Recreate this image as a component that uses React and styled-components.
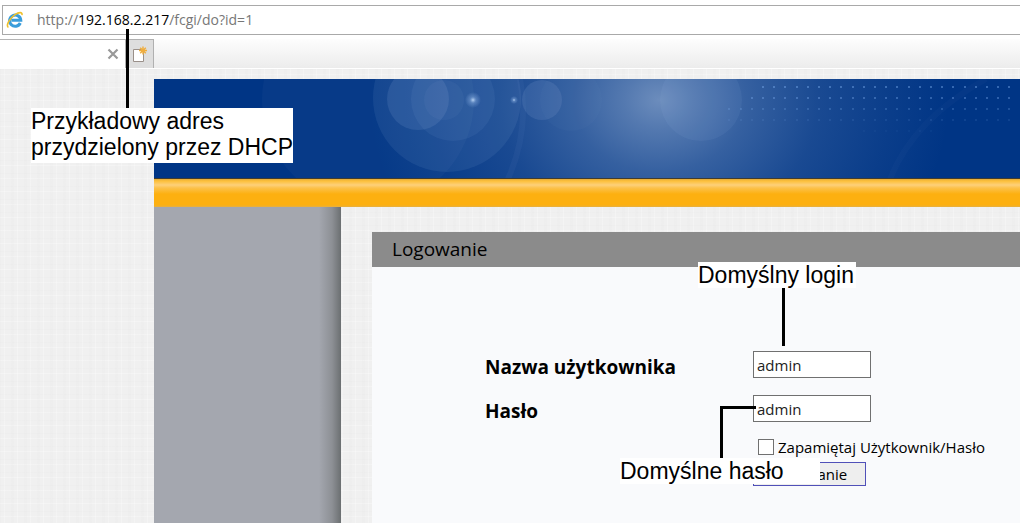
import React from 'react';
import styled, { createGlobalStyle } from 'styled-components';

const ui = '"Open Sans", "Noto Sans", sans-serif';
const noteFont = '"Liberation Sans", Arial, sans-serif';

const GlobalStyle = createGlobalStyle`
  *, *::before, *::after { box-sizing: border-box; }
  html, body, #root { height: 100%; }
  body {
    margin: 0;
    overflow: hidden;
    font-family: ${ui};
    color: #000;
    background: #f1f1f1;
  }
`;

const Page = styled.div`
  position: relative;
  min-height: 100%;
  display: flex;
  flex-direction: column;
`;

const Browser = styled.header`
  display: flex;
  flex-direction: column;
  background: #fff;
`;

const AddressBar = styled.form`
  display: flex;
  align-items: center;
  gap: 13px;
  height: 30px;
  margin: 5px 0 4px 2px;
  padding-left: 3px;
  border: 1px solid #a9a9a9;
  border-right: 0;
`;

const Address = styled.a`
  font-size: 14px;
  line-height: 20px;
  color: #777;
  text-decoration: none;
`;

const Host = styled.span`
  color: #000;
`;

const TabStrip = styled.nav`
  display: flex;
  height: 30px;
  border-bottom: 1px solid #fff;
  background: linear-gradient(#fdfdfd, #ececec);
`;

const Tab = styled.div`
  display: flex;
  align-items: center;
  justify-content: flex-end;
  width: 125px;
  padding-right: 6px;
  border-top: 1px solid #b4b4b4;
  background: #fff;
`;

const IconButton = styled.button`
  display: flex;
  align-items: center;
  justify-content: center;
  padding: 0;
  border: 0;
  background: none;
`;

const NewTab = styled(IconButton)`
  width: 29px;
  background: #dedede;
  border: solid #b0b0b0;
  border-width: 1px 1px 0;
`;

const Site = styled.div`
  flex: 1;
  display: flex;
  flex-direction: column;
  padding: 10px 0 0 154px;
  background-color: #f0f0f0;
  background-image:
    repeating-linear-gradient(90deg, rgba(0, 0, 0, 0.008) 0 1px, transparent 1px 4px, rgba(255, 255, 255, 0.25) 4px 5px, transparent 5px 11px, rgba(0, 0, 0, 0.008) 11px 13px),
    repeating-linear-gradient(rgba(0, 0, 0, 0.008) 0 1px, transparent 1px 5px, rgba(255, 255, 255, 0.25) 5px 6px, transparent 6px 13px);
`;

const Banner = styled.div`
  height: 100px;
  overflow: hidden;
  background: #003585;
  border-bottom: 1px solid #403c30;
`;

const BannerArt = styled.svg`
  display: block;
`;

const Ribbon = styled.div`
  height: 28px;
  background: linear-gradient(#e2ab3a 0, #fdc03a 2px, #fdd07a 6px, #fcc14a 9px, #fdb010 15px, #fdb010 26px, #e6b044 28px);
`;

const Columns = styled.div`
  flex: 1;
  display: flex;
  align-items: stretch;
`;

const Sidebar = styled.aside`
  width: 187px;
  flex: none;
  background: linear-gradient(90deg, #a4a7af calc(100% - 22px), #8d9095 calc(100% - 9px), #6b6f71);
`;

const Panel = styled.main`
  flex: 1;
  margin: 25px 0 0 31px;
  background: #f9fafc;
`;

const PanelTitle = styled.h1`
  margin: 0;
  padding-left: 20px;
  font-size: 19px;
  font-weight: 400;
  line-height: 35px;
  background: #8b8b8b;
`;

const Form = styled.form`
  display: grid;
  grid-template-columns: 268px 1fr;
  row-gap: 12px;
  padding: 84px 0 0 113px;
`;

const Label = styled.label`
  font-size: 19px;
  font-weight: 700;
  line-height: 32px;
`;

const Field = styled.input`
  width: 118px;
  height: 27px;
  padding: 0 3px;
  border: 1px solid #707070;
  background: #fff;
  font: 15px/24px ${ui};
  color: #222;
`;

const Actions = styled.div`
  grid-column: 2;
  display: flex;
  flex-direction: column;
  align-items: flex-start;
  gap: 7px;
`;

const Remember = styled.label`
  display: flex;
  align-items: center;
  gap: 4px;
  padding-left: 5px;
  font-size: 15px;
  line-height: 16px;
  white-space: nowrap;
`;

const Checkbox = styled.input`
  appearance: none;
  width: 16px;
  height: 16px;
  margin: 0;
  border: 1px solid #707070;
  background: #fff;
`;

const Submit = styled.button`
  width: 113px;
  height: 24px;
  padding: 0;
  border: 1px solid #5050b8;
  background: #eee;
  font: 15px/22px ${ui};
  color: #000;
`;

const Note = styled.p`
  position: absolute;
  left: ${(p) => p.$x}px;
  top: ${(p) => p.$y}px;
  min-width: ${(p) => p.$w}px;
  min-height: ${(p) => p.$h}px;
  margin: 0;
  font: 23px/26px ${noteFont};
  white-space: nowrap;
  background: #fff;
`;

const Pointer = styled.span`
  position: absolute;
  left: ${(p) => p.$x}px;
  top: ${(p) => p.$y}px;
  width: ${(p) => p.$w}px;
  height: ${(p) => p.$h}px;
  border: solid #000;
  border-width: ${(p) => (p.$elbow ? '3px 0 0 3px' : '0 0 0 3px')};
`;

function BrowserIcon() {
  return (
    <svg width="18" height="18" viewBox="0 0 18 18" fill="none" aria-hidden="true">
      <path d="M14.300 12A5.600 5.600 0 1 1 14.800 9.300H5.500" stroke="#3a9ddb" strokeWidth="3" />
      <path d="M2.500 16.300C-.5 15.500 3 7.500 9 3.600c4-2.600 7.600-2.800 7 .6" stroke="#f0c02c" strokeWidth="1.600" />
    </svg>
  );
}

function NewTabIcon() {
  return (
    <svg width="16" height="16" viewBox="0 0 16 16" fill="none" aria-hidden="true">
      <path d="M1.500 3.500h10v12h-10z" fill="#fff" stroke="#9a908a" />
      <path d="M11 .5v8M7 4.500h8M8.200 1.700l5.600 5.600M13.800 1.700L8.200 7.300" stroke="#f0ad3c" strokeWidth="1.400" />
    </svg>
  );
}

const dotRows = [
  { y: 7, from: 10, to: 36, opacity: 0.42 },
  { y: 18, from: 9, to: 36, opacity: 0.36 },
  { y: 29, from: 7, to: 36, opacity: 0.24 },
  { y: 40, from: 7, to: 36, opacity: 0.12 },
  { y: 51, from: 19, to: 26, opacity: 0.05 },
];

function Art() {
  return (
    <BannerArt width="1600" height="100" viewBox="0 0 1600 100" aria-hidden="true">
      <defs>
        <radialGradient id="glow">
          <stop offset="0" stopColor="#7f9cc6" stopOpacity=".85" />
          <stop offset=".12" stopColor="#7f9cc6" stopOpacity=".66" />
          <stop offset=".3" stopColor="#7f9cc6" stopOpacity=".42" />
          <stop offset=".55" stopColor="#7f9cc6" stopOpacity=".2" />
          <stop offset=".8" stopColor="#7f9cc6" stopOpacity=".08" />
          <stop offset="1" stopColor="#7f9cc6" stopOpacity="0" />
        </radialGradient>
        <radialGradient id="star">
          <stop offset="0" stopColor="#b8d4f4" />
          <stop offset=".4" stopColor="#7ea4d8" stopOpacity=".5" />
          <stop offset="1" stopColor="#7ea4d8" stopOpacity="0" />
        </radialGradient>
      </defs>
      <ellipse cx="505" cy="21" rx="290" ry="240" fill="url(#glow)" />
      <g fill="#a9c4ee">
        <circle cx="214" cy="21" r="106" opacity=".04" />
        <circle cx="293" cy="19" r="74" opacity=".09" />
        <circle cx="264" cy="20" r="31" opacity=".12" />
        <circle cx="299" cy="20" r="42" opacity=".07" />
        <circle cx="290" cy="21" r="20" opacity=".05" />
        <circle cx="388" cy="21" r="20" opacity=".12" />
        <circle cx="417" cy="21" r="31" opacity=".03" />
        <circle cx="547" cy="21" r="41" opacity=".07" />
      </g>
      <path d="M366 0Q376 50 354 100" fill="none" stroke="#7d9fd4" strokeWidth="6" opacity=".07" />
      <path d="M832 0Q760 40 736 100" fill="none" stroke="#7d9fd4" strokeWidth="6" opacity=".04" />
      <circle cx="319" cy="21" r="8" fill="url(#star)" />
      <circle cx="360" cy="21" r="4" fill="url(#star)" />
      <g fill="#7fb0f0">
        {dotRows.map((row) =>
          Array.from({ length: row.to - row.from }, (_, i) => (
            <rect key={`${row.y}-${i}`} x={Math.round(496 + (row.from + i) * 11.2)} y={row.y} width="2" height="2" opacity={row.opacity} />
          ))
        )}
      </g>
    </BannerArt>
  );
}

export default function App() {
  return (
    <Page>
      <GlobalStyle />
      <Browser>
        <AddressBar>
          <BrowserIcon />
          <Address href="#">
            http://<Host>192.168.2.217</Host>/fcgi/do?id=1
          </Address>
        </AddressBar>
        <TabStrip>
          <Tab>
            <IconButton type="button" aria-label="Zamknij kartę">
              <svg width="12" height="12" viewBox="0 0 12 12" stroke="#999" strokeWidth="2.200" aria-hidden="true">
                <path d="M1.500 1.500l9 9M10.500 1.500l-9 9" />
              </svg>
            </IconButton>
          </Tab>
          <NewTab type="button" aria-label="Nowa karta">
            <NewTabIcon />
          </NewTab>
        </TabStrip>
      </Browser>
      <Site>
        <Banner>
          <Art />
        </Banner>
        <Ribbon />
        <Columns>
          <Sidebar />
          <Panel>
            <PanelTitle>Logowanie</PanelTitle>
            <Form>
              <Label htmlFor="user">Nazwa użytkownika</Label>
              <Field id="user" defaultValue="admin" />
              <Label htmlFor="password">Hasło</Label>
              <Field id="password" defaultValue="admin" />
              <Actions>
                <Remember>
                  <Checkbox type="checkbox" />
                  Zapamiętaj Użytkownik/Hasło
                </Remember>
                <Submit type="button">Logowanie</Submit>
              </Actions>
            </Form>
          </Panel>
        </Columns>
      </Site>
      <Pointer $x={126} $y={29} $w={3} $h={80} />
      <Note $x={31} $y={108} $w={258} $h={55}>
        Przykładowy adres
        <br />
        przydzielony przez DHCP
      </Note>
      <Pointer $x={782} $y={287} $w={3} $h={59} />
      <Note $x={698} $y={262} $w={158} $h={26}>Domyślny login</Note>
      <Pointer $x={720} $y={406} $w={36} $h={53} $elbow />
      <Note $x={620} $y={458} $w={200} $h={26}>Domyślne hasło</Note>
    </Page>
  );
}
